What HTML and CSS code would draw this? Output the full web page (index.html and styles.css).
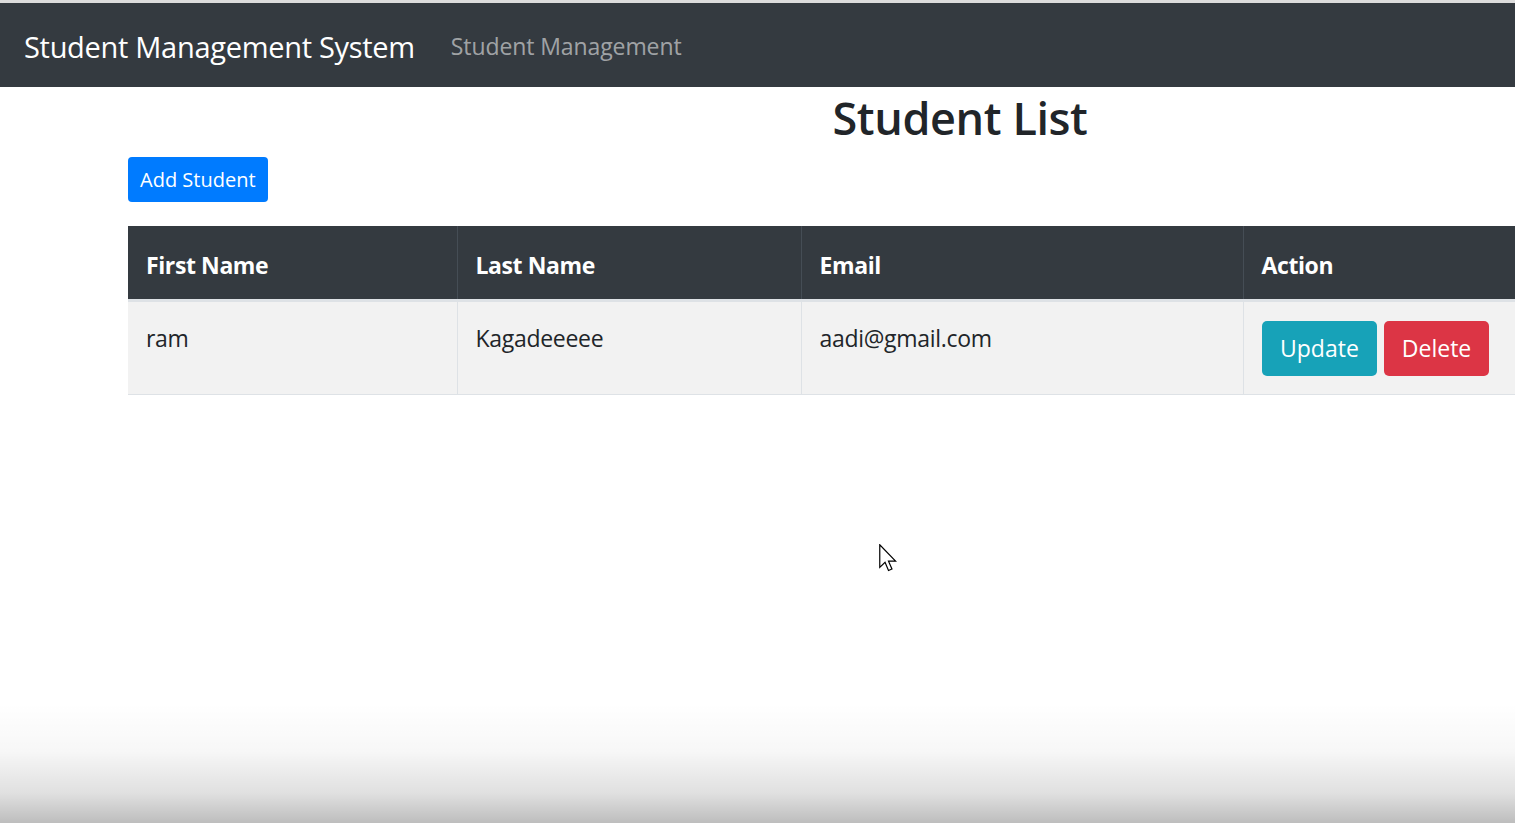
FILE: index.html
```html
<!DOCTYPE html>
<html lang="en">
<head>
<meta charset="utf-8">
<title>Student Management System</title>
<link rel="stylesheet" href="styles.css">
</head>
<body>
  <nav class="navbar">
    <a class="brand" href="#">Student Management System</a>
    <a class="nav-link" href="#">Student Management</a>
  </nav>
  <main class="container">
    <h2 class="title">Student List</h2>
    <div class="toolbar">
      <button class="btn btn-sm btn-primary">Add Student</button>
    </div>
    <table class="table">
      <colgroup>
        <col class="c1"><col class="c2"><col class="c3"><col class="c4">
      </colgroup>
      <thead>
        <tr>
          <th>First Name</th>
          <th>Last Name</th>
          <th>Email</th>
          <th>Action</th>
        </tr>
      </thead>
      <tbody>
        <tr>
          <td>ram</td>
          <td>Kagadeeeee</td>
          <td>aadi@gmail.com</td>
          <td class="actions">
            <button class="btn btn-info">Update</button>
            <button class="btn btn-danger">Delete</button>
          </td>
        </tr>
      </tbody>
    </table>
  </main>
  <div class="fade"></div>
  <svg class="cursor" width="19" height="28" viewBox="0 0 12.6 18.6">
    <path d="M0.5 0.5 L0.5 15.5 L4 12.2 L6.3 17.6 L8.6 16.6 L6.3 11.4 L11 11.4 Z" fill="#fff" stroke="#000" stroke-width="0.8" stroke-linejoin="miter"/>
  </svg>
</body>
</html>
```

FILE: styles.css
```css
html, body {
  margin: 0;
  padding: 0;
  overflow: hidden;
  height: 100%;
}
body {
  font-family: "Open Sans", "Noto Sans", sans-serif;
  color: #212529;
  background: #fff;
  border-top: 3px solid #dcdcdc;
  box-sizing: border-box;
  position: relative;
}
.navbar {
  display: flex;
  align-items: center;
  height: 84px;
  padding: 0 24px;
  background: #343a40;
}
.brand {
  color: #fff;
  font-size: 29px;
  text-decoration: none;
  margin-right: 36px;
  letter-spacing: -0.3px;
  padding-top: 2px;
}
.nav-link {
  color: rgba(255,255,255,0.55);
  font-size: 23px;
  text-decoration: none;
  letter-spacing: -0.1px;
  padding-top: 2px;
}
.container {
  width: 1664px;
  margin-left: 128px;
}
.title {
  text-align: center;
  font-size: 45px;
  font-weight: 600;
  margin: 0;
  line-height: 62px;
  padding-top: 0;
  letter-spacing: -0.4px;
}
.toolbar {
  padding-top: 8px;
  height: 69px;
}
.btn {
  border: none;
  color: #fff;
  font-family: inherit;
  cursor: pointer;
}
.btn-sm {
  height: 45px;
  padding: 0 12px;
  font-size: 20px;
  border-radius: 4px;
}
.btn-primary { background: #007bff; }
.btn-info { background: #17a2b8; }
.btn-danger { background: #dc3545; }
.table {
  width: 1664px;
  border-collapse: collapse;
  table-layout: fixed;
}
.c1 { width: 329px; }
.c2 { width: 344px; }
.c3 { width: 442px; }
.c4 { width: 549px; }
.table th {
  background: #343a40;
  color: #fff;
  font-size: 23px;
  font-weight: 700;
  text-align: left;
  height: 74px;
  padding: 5px 18px 0;
  border-left: 1px solid #454d55;
  border-bottom: 3px solid #dee2e6;
  box-sizing: border-box;
  letter-spacing: -0.4px;
}
.table th:first-child { border-left: none; }
.table td {
  background: #f2f2f2;
  font-size: 23px;
  padding: 17px 18px 18px;
  vertical-align: top;
  line-height: 38px;
  border-left: 1px solid #dee2e6;
  border-bottom: 1px solid #dee2e6;
  letter-spacing: -0.3px;
}
.table td:first-child { border-left: none; }
.table td.actions {
  padding: 19px 18px 18px;
  display: flex;
  gap: 7px;
  border-left: 1px solid #dee2e6;
}
.actions .btn {
  height: 55px;
  font-size: 23px;
  padding: 0 18px;
  border-radius: 5px;
}
.fade {
  position: absolute;
  left: 0;
  right: 0;
  bottom: 0;
  height: 120px;
  background: linear-gradient(to bottom, rgba(0,0,0,0) 0%, rgba(0,0,0,0.03) 40%, rgba(0,0,0,0.12) 75%, rgba(0,0,0,0.26) 100%);
  pointer-events: none;
}
.cursor {
  position: absolute;
  left: 879px;
  top: 541px;
}
```
